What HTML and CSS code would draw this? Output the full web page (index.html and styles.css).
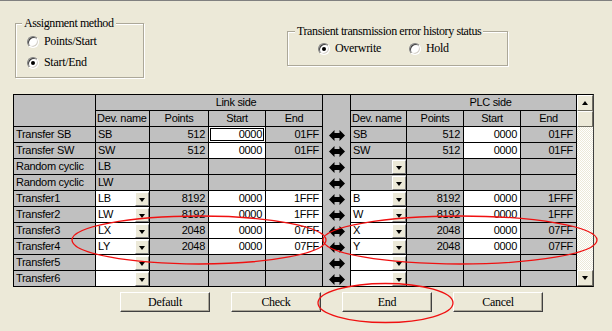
FILE: index.html
```html
<!DOCTYPE html>
<html>
<head>
<meta charset="utf-8">
<link rel="stylesheet" href="styles.css">
</head>
<body>
<div class="dialog">
  <div class="top">
    <div class="group g1">
      <div class="group-title">Assignment method</div>
      <div class="radios col">
        <label class="radio"><span class="dot"></span>Points/Start</label>
        <label class="radio"><span class="dot on"></span>Start/End</label>
      </div>
    </div>
    <div class="group g2">
      <div class="group-title">Transient transmission error history status</div>
      <div class="radios row">
        <label class="radio"><span class="dot on"></span>Overwrite</label>
        <label class="radio hold"><span class="dot"></span>Hold</label>
      </div>
    </div>
  </div>

  <div class="gridwrap">
    <div class="grid">
      <div class="c corner"></div>
      <div class="c h span4">Link side</div>
      <div class="arrows">
        <div class="arrhead"></div>
        <div class="arr"><svg viewBox="0 0 16 11" width="16" height="11"><polygon points="0,5.5 5.5,0 5.5,3 10.5,3 10.5,0 16,5.5 10.5,11 10.5,8 5.5,8 5.5,11"/></svg></div>
        <div class="arr"><svg viewBox="0 0 16 11" width="16" height="11"><polygon points="0,5.5 5.5,0 5.5,3 10.5,3 10.5,0 16,5.5 10.5,11 10.5,8 5.5,8 5.5,11"/></svg></div>
        <div class="arr"><svg viewBox="0 0 16 11" width="16" height="11"><polygon points="0,5.5 5.5,0 5.5,3 10.5,3 10.5,0 16,5.5 10.5,11 10.5,8 5.5,8 5.5,11"/></svg></div>
        <div class="arr"><svg viewBox="0 0 16 11" width="16" height="11"><polygon points="0,5.5 5.5,0 5.5,3 10.5,3 10.5,0 16,5.5 10.5,11 10.5,8 5.5,8 5.5,11"/></svg></div>
        <div class="arr"><svg viewBox="0 0 16 11" width="16" height="11"><polygon points="0,5.5 5.5,0 5.5,3 10.5,3 10.5,0 16,5.5 10.5,11 10.5,8 5.5,8 5.5,11"/></svg></div>
        <div class="arr"><svg viewBox="0 0 16 11" width="16" height="11"><polygon points="0,5.5 5.5,0 5.5,3 10.5,3 10.5,0 16,5.5 10.5,11 10.5,8 5.5,8 5.5,11"/></svg></div>
        <div class="arr"><svg viewBox="0 0 16 11" width="16" height="11"><polygon points="0,5.5 5.5,0 5.5,3 10.5,3 10.5,0 16,5.5 10.5,11 10.5,8 5.5,8 5.5,11"/></svg></div>
        <div class="arr"><svg viewBox="0 0 16 11" width="16" height="11"><polygon points="0,5.5 5.5,0 5.5,3 10.5,3 10.5,0 16,5.5 10.5,11 10.5,8 5.5,8 5.5,11"/></svg></div>
        <div class="arr"><svg viewBox="0 0 16 11" width="16" height="11"><polygon points="0,5.5 5.5,0 5.5,3 10.5,3 10.5,0 16,5.5 10.5,11 10.5,8 5.5,8 5.5,11"/></svg></div>
        <div class="arr"><svg viewBox="0 0 16 11" width="16" height="11"><polygon points="0,5.5 5.5,0 5.5,3 10.5,3 10.5,0 16,5.5 10.5,11 10.5,8 5.5,8 5.5,11"/></svg></div>
      </div>
      <div class="c h span4">PLC side</div>

      <div class="c hl">Dev. name</div><div class="c h">Points</div><div class="c h">Start</div><div class="c h">End</div>
      <div class="c hl">Dev. name</div><div class="c h">Points</div><div class="c h">Start</div><div class="c h">End</div>

      <div class="c l">Transfer SB</div><div class="c l">SB</div><div class="c r">512</div><div class="c r w focus">0000</div><div class="c r">01FF</div>
      <div class="c l">SB</div><div class="c r">512</div><div class="c r w">0000</div><div class="c r">01FF</div>

      <div class="c l">Transfer SW</div><div class="c l">SW</div><div class="c r">512</div><div class="c r w">0000</div><div class="c r">01FF</div>
      <div class="c l">SW</div><div class="c r">512</div><div class="c r w">0000</div><div class="c r">01FF</div>

      <div class="c l">Random cyclic</div><div class="c l">LB</div><div class="c"></div><div class="c"></div><div class="c"></div>
      <div class="c l combo"><span class="dd"></span></div><div class="c"></div><div class="c"></div><div class="c"></div>

      <div class="c l">Random cyclic</div><div class="c l">LW</div><div class="c"></div><div class="c"></div><div class="c"></div>
      <div class="c l combo"><span class="dd"></span></div><div class="c"></div><div class="c"></div><div class="c"></div>

      <div class="c l">Transfer1</div><div class="c l w combo">LB<span class="dd"></span></div><div class="c r">8192</div><div class="c r w">0000</div><div class="c r w">1FFF</div>
      <div class="c l w combo">B<span class="dd"></span></div><div class="c r">8192</div><div class="c r w">0000</div><div class="c r">1FFF</div>

      <div class="c l">Transfer2</div><div class="c l w combo">LW<span class="dd"></span></div><div class="c r">8192</div><div class="c r w">0000</div><div class="c r w">1FFF</div>
      <div class="c l w combo">W<span class="dd"></span></div><div class="c r">8192</div><div class="c r w">0000</div><div class="c r">1FFF</div>

      <div class="c l">Transfer3</div><div class="c l w combo">LX<span class="dd"></span></div><div class="c r">2048</div><div class="c r w">0000</div><div class="c r w">07FF</div>
      <div class="c l w combo">X<span class="dd"></span></div><div class="c r">2048</div><div class="c r w">0000</div><div class="c r">07FF</div>

      <div class="c l">Transfer4</div><div class="c l w combo">LY<span class="dd"></span></div><div class="c r">2048</div><div class="c r w">0000</div><div class="c r w">07FF</div>
      <div class="c l w combo">Y<span class="dd"></span></div><div class="c r">2048</div><div class="c r w">0000</div><div class="c r">07FF</div>

      <div class="c l">Transfer5</div><div class="c l w combo"><span class="dd"></span></div><div class="c"></div><div class="c"></div><div class="c"></div>
      <div class="c l w combo"><span class="dd"></span></div><div class="c"></div><div class="c"></div><div class="c"></div>

      <div class="c l">Transfer6</div><div class="c l w combo"><span class="dd"></span></div><div class="c"></div><div class="c"></div><div class="c"></div>
      <div class="c l w combo"><span class="dd"></span></div><div class="c"></div><div class="c"></div><div class="c"></div>
    </div>
    <div class="scrollbar">
      <div class="sbtn"><span class="tri up"></span></div>
      <div class="sbtn thumb"></div>
      <div class="track"></div>
      <div class="sbtn"><span class="tri down"></span></div>
    </div>
  </div>

  <div class="buttons">
    <button class="btn">Default</button>
    <button class="btn">Check</button>
    <button class="btn">End</button>
    <button class="btn">Cancel</button>
  </div>

  <svg class="annot" width="612" height="331" viewBox="0 0 612 331">
    <ellipse cx="199" cy="239" rx="127" ry="24"/>
    <ellipse cx="460" cy="239" rx="137" ry="24"/>
    <ellipse cx="385.5" cy="302" rx="67.5" ry="19.5"/>
  </svg>
</div>
</body>
</html>
```
FILE: styles.css
```css
html, body {
  margin: 0;
  padding: 0;
  background: #ECE9D8;
}
.dialog {
  position: relative;
  width: 612px;
  height: 331px;
  overflow: hidden;
  background: #ECE9D8;
  font-family: "Liberation Serif", serif;
  font-size: 12px;
  color: #000;
  border-top: 1px solid #808080;
  box-sizing: border-box;
}
.top {
  display: flex;
  align-items: flex-start;
  height: 93px;
}
.group {
  border: 1px solid #ACA899;
  box-shadow: inset 1px 1px 0 #fff, 1px 1px 0 #fff;
  box-sizing: border-box;
}
.group-title {
  width: fit-content;
  background: #ECE9D8;
  padding: 0 2px;
  line-height: 14px;
  margin-top: -8px;
  letter-spacing: -0.4px;
}
.g1 {
  margin-left: 15px;
  margin-top: 22px;
  width: 129px;
  height: 55px;
  padding: 0 6px;
}
.g2 {
  margin-left: 143px;
  margin-top: 30px;
  width: 221px;
  height: 35px;
  padding: 0 7px;
}
.radios.col {
  display: flex;
  flex-direction: column;
  margin-top: 1px;
  padding-left: 5px;
}
.radios.col .radio { height: 21px; }
.radios.row {
  display: flex;
  padding-left: 23px;
  margin-top: 3px;
}
.radio {
  display: flex;
  align-items: center;
  gap: 5px;
  letter-spacing: -0.3px;
}
.radio.hold { margin-left: 28px; }
.dot {
  width: 12px;
  height: 12px;
  box-sizing: border-box;
  border-radius: 50%;
  background: #fff;
  border: 1px solid;
  border-color: #808080 #fff #fff #808080;
  box-shadow: inset 1px 1px 0 #404040, inset -1px -1px 0 #D4D0C8;
  display: flex;
  align-items: center;
  justify-content: center;
}
.dot.on::after {
  content: "";
  width: 4px;
  height: 4px;
  border-radius: 50%;
  background: #000;
}

/* Grid */
.gridwrap {
  display: flex;
  margin-left: 13px;
  width: fit-content;
}
.grid {
  display: grid;
  grid-template-columns: 81px 53px 58px 56px 56px 27px 55px 56px 56px 55px;
  grid-auto-rows: 15px;
  gap: 1px;
  background: #000;
  padding: 1px;
  font-family: "Liberation Sans", Arial, sans-serif;
  font-size: 11px;
  letter-spacing: -0.3px;
}
.c {
  background: #C0C0C0;
  line-height: 15px;
  white-space: nowrap;
  overflow: hidden;
  position: relative;
}
.corner { grid-row: span 2; }
.span4 { grid-column: span 4; }
.h { text-align: center; }
.span4.h { padding-left: 54px; }
.hl { padding-left: 1px; }
.l { padding-left: 2px; }
.r { text-align: right; padding-right: 3px; }
.w { background: #fff; }
.focus {
  box-shadow: inset 0 0 0 1px #fff, inset 0 0 0 2px #000;
}
.combo {
  display: flex;
  justify-content: space-between;
}
.dd {
  align-self: flex-end;
  width: 14px;
  height: 14px;
  box-sizing: border-box;
  background: #ECE9D8;
  border: 1px solid;
  border-color: #fff #808080 #808080 #fff;
  display: flex;
  align-items: center;
  justify-content: center;
  margin-left: auto;
}
.dd::after {
  content: "";
  border-left: 3.5px solid transparent;
  border-right: 3.5px solid transparent;
  border-top: 4px solid #000;
  margin-top: 1px;
}
.arrows {
  grid-row: span 12;
  background: #C0C0C0;
  display: flex;
  flex-direction: column;
}
.arrhead { height: 32px; flex: none; }
.arr {
  height: 16px;
  flex: none;
  display: flex;
  align-items: center;
  justify-content: center;
}
.arr svg { display: block; }
.arr polygon { fill: #000; }

.scrollbar {
  width: 17px;
  display: flex;
  flex-direction: column;
  border-right: 1px solid #404040;
  border-top: 1px solid #000;
  border-bottom: 1px solid #000;
  box-sizing: border-box;
}
.sbtn {
  height: 16px;
  flex: none;
  box-sizing: border-box;
  background: #ECE9D8;
  border: 1px solid;
  border-color: #fff #716F64 #716F64 #fff;
  display: flex;
  align-items: center;
  justify-content: center;
}
.track {
  flex: 1;
  background: repeating-conic-gradient(#fff 0 25%, #ECE9D8 0 50%) 0 0 / 2px 2px;
}
.tri {
  border-left: 3.5px solid transparent;
  border-right: 3.5px solid transparent;
}
.tri.up { border-bottom: 4px solid #000; }
.tri.down { border-top: 4px solid #000; }

/* Buttons */
.buttons {
  display: flex;
  gap: 21px;
  margin-left: 120px;
  margin-top: 5px;
}
.btn {
  width: 90px;
  height: 20px;
  margin: 0;
  padding: 0;
  background: #ECE9D8;
  border: 1px solid;
  border-color: #fff #404040 #404040 #fff;
  box-shadow: inset -1px -1px 0 #ACA899;
  font-family: "Liberation Serif", serif;
  font-size: 12px;
  letter-spacing: -0.3px;
  color: #000;
}

.annot {
  position: absolute;
  left: 0;
  top: 0;
  pointer-events: none;
}
.annot ellipse {
  fill: none;
  stroke: #F01010;
  stroke-width: 1.3;
}
```
